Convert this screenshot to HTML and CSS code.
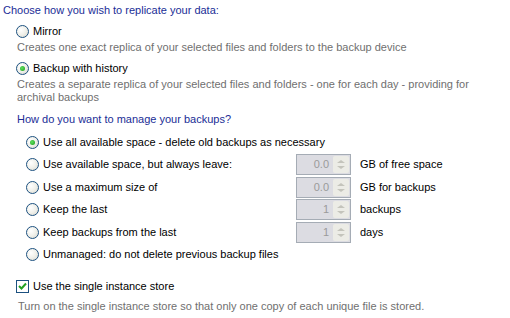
FILE: index.html
```html
<!DOCTYPE html>
<html lang="en">
<head>
    <meta charset="UTF-8">
    <title>Backup Options</title>
    <link rel="stylesheet" href="styles.css">
</head>
<body>
    <div class="page">
        <div class="heading">Choose how you wish to replicate your data:</div>

        <div class="mode">
            <label class="option"><span class="radio"></span>Mirror</label>
            <p class="desc">Creates one exact replica of your selected files and folders to the backup device</p>
        </div>

        <div class="mode">
            <label class="option"><span class="radio checked"></span>Backup with history</label>
            <p class="desc">Creates a separate replica of your selected files and folders - one for each day - providing for archival backups</p>
        </div>

        <div class="heading sub">How do you want to manage your backups?</div>

        <div class="manage">
            <div class="row">
                <label class="option wide"><span class="radio checked"></span>Use all available space - delete old backups as necessary</label>
            </div>
            <div class="row">
                <label class="option"><span class="radio"></span>Use available space, but always leave:</label>
                <div class="spinner"><span class="value">0.0</span><span class="arrows"></span></div>
                <span class="unit">GB of free space</span>
            </div>
            <div class="row">
                <label class="option"><span class="radio"></span>Use a maximum size of</label>
                <div class="spinner"><span class="value">0.0</span><span class="arrows"></span></div>
                <span class="unit">GB for backups</span>
            </div>
            <div class="row">
                <label class="option"><span class="radio"></span>Keep the last</label>
                <div class="spinner"><span class="value">1</span><span class="arrows"></span></div>
                <span class="unit">backups</span>
            </div>
            <div class="row">
                <label class="option"><span class="radio"></span>Keep backups from the last</label>
                <div class="spinner"><span class="value">1</span><span class="arrows"></span></div>
                <span class="unit">days</span>
            </div>
            <div class="row">
                <label class="option wide"><span class="radio"></span>Unmanaged: do not delete previous backup files</label>
            </div>
        </div>

        <label class="option store">
            <span class="checkbox">
                <svg width="11" height="11" viewBox="0 0 11 11"><path d="M2 5 L4.5 7.5 L9 2.5" fill="none" stroke="#21a121" stroke-width="2"/></svg>
            </span>Use the single instance store
        </label>
        <p class="desc store-desc">Turn on the single instance store so that only one copy of each unique file is stored.</p>
    </div>
</body>
</html>
```

FILE: styles.css
```css
* {
    margin: 0;
    padding: 0;
    box-sizing: border-box;
}

body {
    background: #ffffff;
    color: #000000;
    font-family: 'Liberation Sans', Arial, sans-serif;
    font-size: 11px;
    line-height: 13px;
}

.page {
    padding: 4px 0 0 3px;
}

.heading {
    color: #1a2d96;
}

.heading.sub {
    margin: 9px 0 0 14px;
}

.mode {
    padding-left: 13px;
    margin-top: 8px;
}

.mode + .mode {
    margin-top: 8px;
}

.option {
    display: flex;
    align-items: center;
    gap: 4px;
}

.option.wide {
    grid-column: 1 / -1;
}

.desc {
    color: #6f6f6f;
    margin-top: 3px;
    padding-left: 1px;
    padding-right: 30px;
}

/* XP style radio */
.radio {
    width: 13px;
    height: 13px;
    border-radius: 50%;
    border: 1px solid #1c5180;
    background: radial-gradient(circle at 35% 35%, #ffffff 0%, #f0f0ea 50%, #d4d4cc 100%);
    position: relative;
    flex-shrink: 0;
}

.radio.checked::after {
    content: '';
    position: absolute;
    left: 3px;
    top: 3px;
    width: 5px;
    height: 5px;
    border-radius: 50%;
    background: radial-gradient(circle at 40% 40%, #5fe05f, #1a9a1a);
}

.manage {
    margin-top: 5px;
    padding-left: 23px;
}

.row {
    display: grid;
    grid-template-columns: 261px 55px auto;
    column-gap: 9px;
    align-items: center;
    height: 22.5px;
}

.spinner {
    display: flex;
    height: 21px;
    border: 1px solid #a5acb5;
    background: #dcdce2;
}

.spinner .value {
    flex: 1;
    text-align: right;
    color: #9a9a9a;
    padding: 3px 3px 0 0;
}

.spinner .arrows {
    width: 16px;
    margin: 1px;
    background: #ecece6;
    border-radius: 2px;
    position: relative;
}

.spinner .arrows::before,
.spinner .arrows::after {
    content: '';
    position: absolute;
    left: 4px;
    border-left: 4px solid transparent;
    border-right: 4px solid transparent;
}

.spinner .arrows::before {
    top: 4px;
    border-bottom: 3px solid #c4c4bc;
}

.spinner .arrows::after {
    bottom: 4px;
    border-top: 3px solid #c4c4bc;
}

.store {
    margin: 14px 0 0 13px;
}

.checkbox {
    width: 13px;
    height: 13px;
    border: 1px solid #1c5180;
    background: #ffffff;
    display: flex;
    align-items: center;
    justify-content: center;
}

.store-desc {
    margin: 7px 0 0 14px;
}
```
